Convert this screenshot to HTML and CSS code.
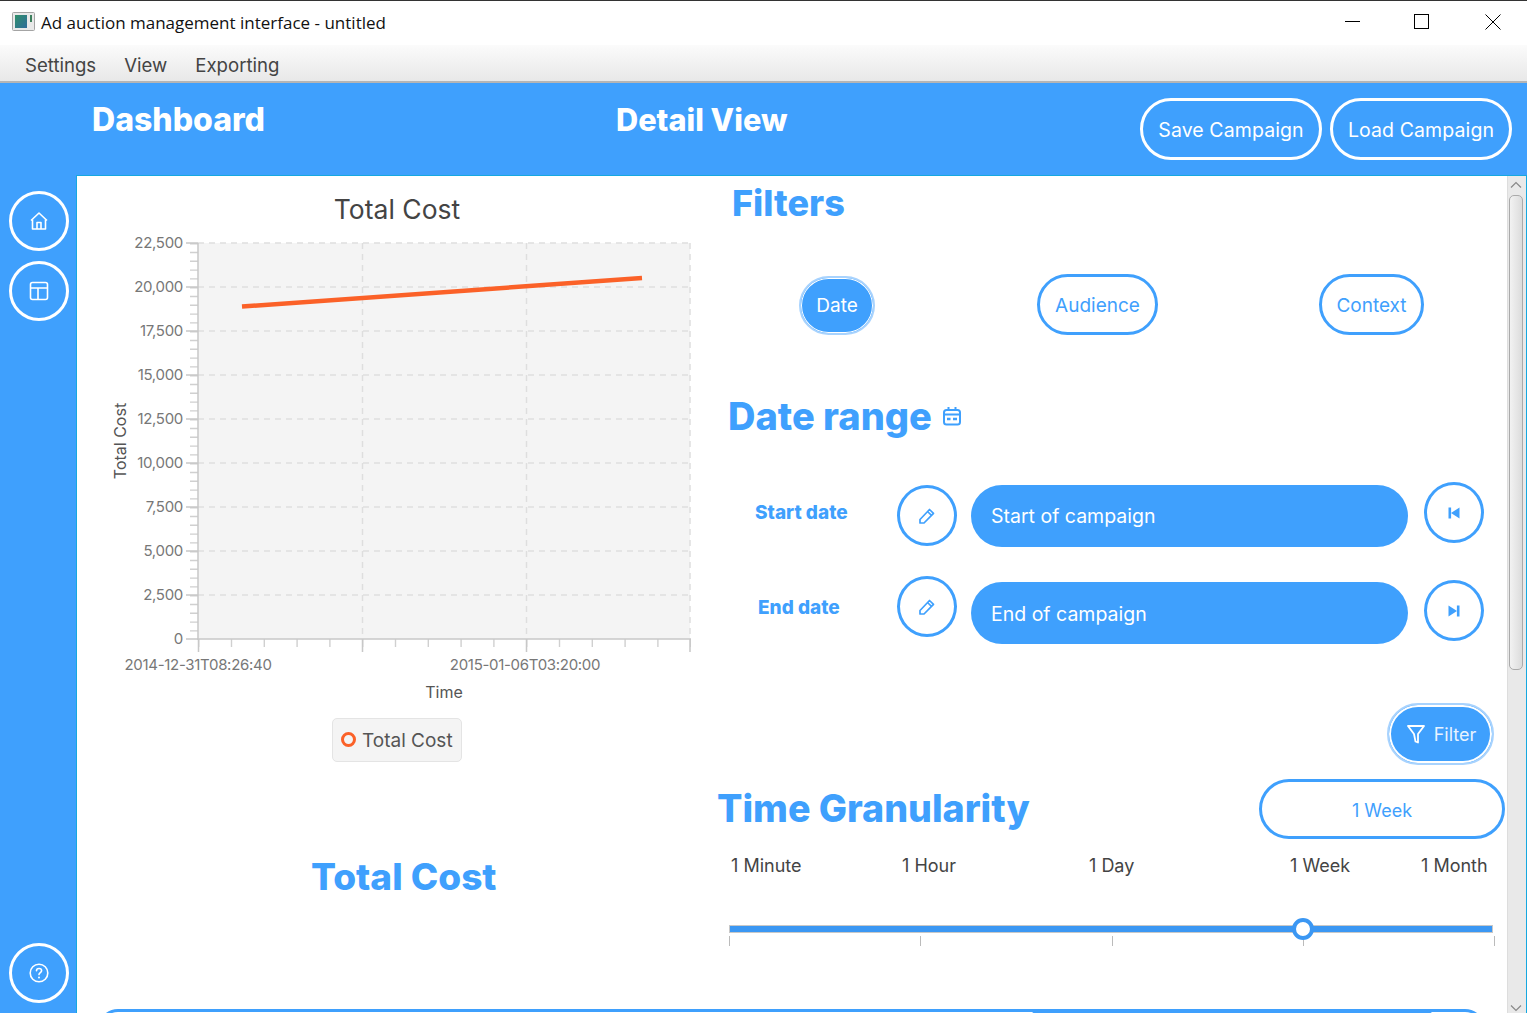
FILE: index.html
```html
<!DOCTYPE html>
<html lang="en">
    <head>
        <meta charset="UTF-8" />
        <meta name="viewport" content="width=device-width, initial-scale=1.0" />
        <title>Ad auction management interface - untitled</title>
        <link rel="stylesheet" href="styles.css">
    </head>
    <body>
        <div class="titlebar">
            <svg class="appicon" width="24" height="20" viewBox="0 0 24 20">
                <defs>
                    <linearGradient id="appfill" x1="0" y1="0" x2="1" y2="1">
                        <stop offset="0" stop-color="#2f8f6a" />
                        <stop offset="1" stop-color="#2f6d9c" />
                    </linearGradient>
                </defs>
                <rect x="0.5" y="0.5" width="22" height="18" rx="1" fill="#e9e9e9" stroke="#a4a4a4" />
                <rect x="3" y="3" width="12" height="13" fill="url(#appfill)" />
                <rect x="18" y="3" width="2" height="7" fill="#3d7f5d" />
            </svg>
            <span class="titletext">Ad auction management interface - untitled</span>
            <div class="wincontrols">
                <svg width="16" height="16" viewBox="0 0 16 16"><path d="M0 7.5H15" stroke="#000" fill="none" /></svg>
                <svg width="16" height="16" viewBox="0 0 16 16"><rect x="0.5" y="0.5" width="14" height="14" stroke="#000" fill="none" /></svg>
                <svg class="closeicon" width="16" height="16" viewBox="0 0 16 16"><path d="M0.5 0.5L15.5 15.5M15.5 0.5L0.5 15.5" stroke="#000" fill="none" /></svg>
            </div>
        </div>
        <div class="menubar">
            <span>Settings</span>
            <span>View</span>
            <span>Exporting</span>
        </div>
        <header class="topbar">
            <h1 class="toptitle dash">Dashboard</h1>
            <h1 class="toptitle detail">Detail View</h1>
            <div class="topactions">
                <button class="topbtn">Save Campaign</button>
                <button class="topbtn">Load Campaign</button>
            </div>
        </header>
        <div class="main">
            <nav class="sidebar">
                <button class="sidebtn">
                    <svg width="20" height="20" viewBox="0 0 20 20" fill="none" stroke="#fff" stroke-width="1.6" stroke-linejoin="round">
                        <path d="M2 9.5L10 2L18 9.5" /><path d="M3.5 8.5V18H16.5V8.5" /><path d="M8 18V11.5H12V18" />
                    </svg>
                </button>
                <button class="sidebtn">
                    <svg width="20" height="20" viewBox="0 0 20 20" fill="none" stroke="#fff" stroke-width="1.6" stroke-linejoin="round">
                        <rect x="1.5" y="1.5" width="17" height="17" rx="2" /><path d="M1.5 7H18.5M9 7V18.5" />
                    </svg>
                </button>
                <button class="sidebtn help">
                    <svg width="20" height="20" viewBox="0 0 20 20" fill="none" stroke="#fff" stroke-width="1.6" stroke-linecap="round">
                        <circle cx="10" cy="10" r="8.8" /><path d="M7.5 7.8C7.5 4.8 12.6 4.8 12.6 7.8C12.6 9.6 10 9.6 10 11.6" /><path d="M10 14.4V14.6" stroke-width="2" />
                    </svg>
                </button>
            </nav>
            <div class="content">
                <div class="scrollarea">
                    <div class="columns">
                        <section class="leftcol">
                            <svg class="chart" width="640" height="533" viewBox="77 177 640 533">
                                <text class="charttitle" x="397" y="219" text-anchor="middle">Total Cost</text>
                                <rect x="198" y="243" width="492" height="396" fill="#f4f4f4" />
                                <path class="grid" d="M198 243H690M198 287H690M198 331H690M198 375H690M198 419H690M198 463H690M198 507H690M198 551H690M198 595H690M362.500 243V639M526.500 243V639M690 243V639" />
                                <line class="minor" x1="194" y1="243" x2="194" y2="639" stroke-width="8" stroke-dasharray="1.4 7.4" />
                                <line class="minor" x1="198" y1="643" x2="691" y2="643" stroke-width="8" stroke-dasharray="1.4 31.4" />
                                <path class="axis" d="M198 243V640M197 639H691" />
                                <path class="major" d="M186 243H198M186 287H198M186 331H198M186 375H198M186 419H198M186 463H198M186 507H198M186 551H198M186 595H198M186 639H198M198.500 639V652M362.500 639V652M526.500 639V652M690 639V652" />
                                <line class="series" x1="242" y1="306.500" x2="642" y2="278" />
                                <g class="ticklabel" text-anchor="end">
                                    <text x="183" y="248">22,500</text>
                                    <text x="183" y="292">20,000</text>
                                    <text x="183" y="336">17,500</text>
                                    <text x="183" y="380">15,000</text>
                                    <text x="183" y="424">12,500</text>
                                    <text x="183" y="468">10,000</text>
                                    <text x="183" y="512">7,500</text>
                                    <text x="183" y="556">5,000</text>
                                    <text x="183" y="600">2,500</text>
                                    <text x="183" y="644">0</text>
                                </g>
                                <text class="ticklabel" x="198" y="670" text-anchor="middle">2014-12-31T08:26:40</text>
                                <text class="ticklabel" x="525" y="670" text-anchor="middle">2015-01-06T03:20:00</text>
                                <text class="axislabel" x="444" y="698" text-anchor="middle">Time</text>
                                <text class="axislabel" transform="translate(126 441) rotate(-90)" text-anchor="middle">Total Cost</text>
                            </svg>
                            <div class="legend"><span class="legendmark"></span>Total Cost</div>
                            <h2 class="heading costheading">Total Cost</h2>
                        </section>
                        <section class="rightcol">
                            <h2 class="heading filters">Filters</h2>
                            <div class="tabs">
                                <button class="tab selected">Date</button>
                                <button class="tab audience">Audience</button>
                                <button class="tab context">Context</button>
                            </div>
                            <div class="heading daterange">
                                Date range
                                <svg width="20" height="20" viewBox="0 0 20 20" fill="none" stroke="#3fa0fd" stroke-width="2">
                                    <rect x="2" y="4" width="16" height="14.500" rx="2.500" /><path d="M2 8.500H18M6.500 1V5M13.500 1V5" /><path d="M5 13H8.500M11 13H15" stroke-width="2.500" />
                                </svg>
                            </div>
                            <div class="daterow first">
                                <span class="datelabel">Start date</span>
                                <button class="circlebtn">
                                    <svg width="18" height="18" viewBox="0 0 18 18" fill="none" stroke="#3fa0fd" stroke-width="1.700" stroke-linejoin="round">
                                        <path d="M2 12.500L11.500 2.500L15.500 6.300L6 16H2V12.500Z" /><path d="M9.500 4.500L13.500 8.300" />
                                    </svg>
                                </button>
                                <div class="datepill">Start of campaign</div>
                                <button class="circlebtn skip">
                                    <svg width="12" height="12" viewBox="0 0 12 12" fill="#3fa0fd"><rect x="0.500" y="0.500" width="2.600" height="11" /><path d="M11.500 0.500V11.500L3 6Z" /></svg>
                                </button>
                            </div>
                            <div class="daterow second">
                                <span class="datelabel">End date</span>
                                <button class="circlebtn">
                                    <svg width="18" height="18" viewBox="0 0 18 18" fill="none" stroke="#3fa0fd" stroke-width="1.700" stroke-linejoin="round">
                                        <path d="M2 12.500L11.500 2.500L15.500 6.300L6 16H2V12.500Z" /><path d="M9.500 4.500L13.500 8.300" />
                                    </svg>
                                </button>
                                <div class="datepill">End of campaign</div>
                                <button class="circlebtn skip">
                                    <svg width="12" height="12" viewBox="0 0 12 12" fill="#3fa0fd"><rect x="8.900" y="0.500" width="2.600" height="11" /><path d="M0.500 0.500V11.500L9 6Z" /></svg>
                                </button>
                            </div>
                            <div class="filterrow">
                                <button class="filterbtn">
                                    <svg width="18" height="20" viewBox="0 0 18 20" fill="none" stroke="#fff" stroke-width="1.800" stroke-linejoin="round"><path d="M1 2H17L11 10V18.500L8.500 17.500L7 10Z" /></svg>
                                    Filter
                                </button>
                            </div>
                            <div class="granrow">
                                <h2 class="heading gran">Time Granularity</h2>
                                <button class="granbtn">1 Week</button>
                            </div>
                            <div class="slidelabels">
                                <span>1 Minute</span>
                                <span>1 Hour</span>
                                <span>1 Day</span>
                                <span>1 Week</span>
                                <span>1 Month</span>
                            </div>
                            <div class="slider">
                                <div class="track"><span class="thumb"></span></div>
                                <div class="sliderticks"><i></i><i></i><i></i><i></i><i></i></div>
                            </div>
                        </section>
                    </div>
                    <div class="bottompill"><span class="bottomfill"></span></div>
                </div>
                <div class="scrollbar">
                    <svg width="12" height="8" viewBox="0 0 12 8"><path d="M1 6.500L6 1.500L11 6.500" fill="none" stroke="#888" stroke-width="1.200" /></svg>
                    <div class="scrollthumb"></div>
                    <svg class="scrolldown" width="12" height="8" viewBox="0 0 12 8"><path d="M1 1.500L6 6.500L11 1.500" fill="none" stroke="#888" stroke-width="1.200" /></svg>
                </div>
            </div>
        </div>
    </body>
</html>
```

FILE: styles.css
```css
* {
    box-sizing: border-box;
}
html, body {
    margin: 0;
    height: 1013px;
    overflow: hidden;
}
body {
    display: flex;
    flex-direction: column;
    background: #fff;
    font-family: Inter, "Liberation Sans", sans-serif;
    border-top: 1px solid #333;
}
button {
    font-family: inherit;
    background: none;
    cursor: pointer;
    padding: 0;
}

/* window chrome */
.titlebar {
    height: 44px;
    display: flex;
    align-items: center;
    padding-left: 12px;
    background: #fff;
}
.appicon {
    margin-right: 5px;
    margin-top: -3px;
}
.titletext {
    font: 17px "Open Sans", sans-serif;
    color: #111;
    margin-top: -1px;
}
.wincontrols {
    margin-left: auto;
    display: flex;
    gap: 53px;
    padding-right: 26px;
    margin-top: -3px;
}
.closeicon {
    margin-left: 2px;
}
.menubar {
    height: 38px;
    display: flex;
    align-items: center;
    gap: 28px;
    padding: 3px 0 0 25px;
    background: linear-gradient(#fbfbfb, #e8e8e8);
    border-bottom: 2px solid #b5b5b5;
    font-size: 18.6px;
    color: #444;
}

/* blue header */
.topbar {
    height: 92px;
    background: #3fa0fd;
    display: flex;
    color: #fff;
}
.toptitle {
    margin: 0;
    font-weight: 800;
    line-height: 74px;
}
.dash {
    margin-left: 92px;
    width: 524px;
    font-size: 32px;
}
.detail {
    font-size: 30.7px;
}
.topactions {
    margin-left: auto;
    margin-right: 15px;
    margin-top: 15px;
    display: flex;
    gap: 8px;
}
.topbtn {
    width: 182px;
    height: 62px;
    padding-top: 1px;
    border: 3px solid #fff;
    border-radius: 31px;
    color: #fff;
    font-size: 19.5px;
    letter-spacing: 0.1px;
}

.main {
    flex: 1;
    display: flex;
    min-height: 0;
    background: #3fa0fd;
}
.sidebar {
    width: 76px;
    padding: 16px 0 10px 9px;
    display: flex;
    flex-direction: column;
    gap: 10px;
}
.sidebtn {
    width: 60px;
    height: 60px;
    border: 3px solid #fff;
    border-radius: 50%;
    display: flex;
    align-items: center;
    justify-content: center;
}
.help {
    margin-top: auto;
}
.content {
    flex: 1;
    display: flex;
    min-width: 0;
    background: #fff;
    border: 1px solid #16a8e0;
    border-bottom: 0;
}
.scrollarea {
    flex: 1;
    overflow: hidden;
    padding-top: 1px;
}
.columns {
    display: flex;
    height: 832px;
}

/* left column */
.leftcol {
    width: 640px;
}
.chart {
    display: block;
}
.charttitle {
    font-size: 26.5px;
    fill: #444;
}
.grid {
    fill: none;
    stroke: #dedede;
    stroke-width: 1.500;
    stroke-dasharray: 6 5;
}
.minor {
    stroke: #d0d0d0;
}
.axis, .major {
    fill: none;
    stroke: #c8c8c8;
    stroke-width: 1.500;
}
.series {
    stroke: #fb6128;
    stroke-width: 4.500;
}
.ticklabel {
    font-size: 15px;
    letter-spacing: -0.3px;
    fill: #777;
}
.axislabel {
    font-size: 16px;
    fill: #555;
}
.legend {
    width: 130px;
    height: 44px;
    margin: 8px 0 0 255px;
    border: 1px solid #e4e4e4;
    border-radius: 5px;
    background: #f4f4f4;
    display: flex;
    align-items: center;
    padding-left: 8px;
    gap: 6px;
    font-size: 19px;
    color: #555;
    white-space: nowrap;
}
.legendmark {
    width: 15px;
    height: 15px;
    border: 3px solid #fb6128;
    border-radius: 50%;
    margin-top: -2px;
}
.heading {
    margin: 0;
    font-weight: 800;
    color: #3fa0fd;
}
.costheading {
    margin: 89px 0 0 234px;
    font-size: 37px;
    line-height: 52px;
}

/* right column */
.rightcol {
    flex: 1;
    min-width: 0;
}
.filters {
    padding-left: 15px;
    font-size: 36px;
    line-height: 52px;
}
.tabs {
    display: flex;
    align-items: flex-end;
    margin-top: 45px;
    padding-left: 82px;
}
.tab {
    height: 61px;
    padding-top: 1px;
    border: 3px solid #3fa0fd;
    border-radius: 31px;
    color: #3fa0fd;
    font-size: 19px;
}
.selected {
    width: 76px;
    height: 59px;
    padding-top: 0;
    background: #3fa0fd;
    color: #fff;
    box-shadow: inset 0 0 0 1px #fff;
    border-width: 2px;
    border-color: #a8d3fe;
}
.audience {
    width: 121px;
    margin-left: 162px;
}
.context {
    width: 105px;
    margin-left: 161px;
}
.daterange {
    display: flex;
    align-items: center;
    gap: 10px;
    margin-top: 55px;
    padding-left: 11px;
    font-size: 38px;
    line-height: 52px;
}
.daterow {
    display: grid;
    grid-template-columns: 180px 74px 453px 60px;
    align-items: start;
}
.first {
    margin-top: 40px;
    height: 64px;
}
.second {
    margin-top: 30px;
    height: 68px;
}
.datelabel {
    font-size: 19px;
    font-weight: 800;
    color: #3fa0fd;
    line-height: 24px;
}
.first .datelabel {
    margin: 19px 0 0 38px;
}
.second .datelabel {
    margin: 20px 0 0 41px;
}
.circlebtn {
    width: 60px;
    height: 61px;
    border: 3px solid #3fa0fd;
    border-radius: 50%;
    display: flex;
    align-items: center;
    justify-content: center;
}
.first .circlebtn {
    margin-top: 3px;
}
.first .skip {
    margin-top: 0;
}
.second .skip {
    margin-top: 4px;
}
.datepill {
    width: 437px;
    height: 62px;
    border-radius: 31px;
    background: #3fa0fd;
    color: #fff;
    font-size: 19.5px;
    padding-left: 20px;
}
.first .datepill {
    margin-top: 3px;
    line-height: 63px;
}
.second .datepill {
    margin-top: 6px;
    line-height: 65px;
}
.filterrow {
    display: flex;
    justify-content: flex-end;
    margin-top: 59px;
    padding-right: 13px;
}
.filterbtn {
    width: 107px;
    height: 62px;
    padding-left: 2px;
    border: 2px solid #a8d3fe;
    border-radius: 31px;
    background: #3fa0fd;
    box-shadow: inset 0 0 0 2px #fff;
    color: #e8f3ff;
    font-size: 18px;
    display: flex;
    align-items: center;
    justify-content: center;
    gap: 9px;
}
.granrow {
    display: flex;
    justify-content: space-between;
    align-items: center;
    margin-top: 14px;
    padding-right: 2px;
}
.gran {
    font-size: 37.6px;
    line-height: 60px;
}
.granbtn {
    width: 246px;
    height: 60px;
    padding-top: 2px;
    border: 3px solid #3fa0fd;
    border-radius: 30px;
    color: #3fa0fd;
    font-size: 18px;
}
.slidelabels {
    display: grid;
    grid-template-columns: 171px 187px 201px 131px auto;
    margin-top: 15px;
    padding-left: 14px;
    font-size: 18px;
    line-height: 24px;
    color: #444;
}
.slider {
    margin: 47px 0 0 12px;
    width: 766px;
}
.track {
    position: relative;
    width: 764px;
    height: 8px;
    background: #3b97f3;
    border: 1px solid #c8c8c8;
}
.thumb {
    position: absolute;
    left: 562px;
    top: -8px;
    width: 22px;
    height: 22px;
    border: 4px solid #3b97f3;
    border-radius: 50%;
    background: #fff;
}
.sliderticks {
    display: flex;
    justify-content: space-between;
    margin-top: 3px;
}
.sliderticks i {
    width: 1px;
    height: 10px;
    background: #bbb;
}
.bottompill {
    margin: 0 0 0 21px;
    width: 1387px;
    height: 40px;
    border: 3px solid #3fa0fd;
    border-radius: 20px;
}
.bottomfill {
    display: block;
    margin: -3px 0 0 923px;
    width: 416px;
    height: 40px;
    background: #3fa0fd;
    border-radius: 20px;
}

/* scrollbar */
.scrollbar {
    width: 19px;
    background: #e9e9e9;
    border-left: 1px solid #ddd;
    display: flex;
    flex-direction: column;
    align-items: center;
    padding: 5px 2px 0 0;
}
.scrollthumb {
    width: 14px;
    height: 475px;
    margin-top: 6px;
    border: 1px solid #aaa;
    border-radius: 5px;
    background: linear-gradient(90deg, #f2f2f2, #dcdcdc);
}
.scrolldown {
    margin-top: auto;
    margin-bottom: 1px;
}
```
